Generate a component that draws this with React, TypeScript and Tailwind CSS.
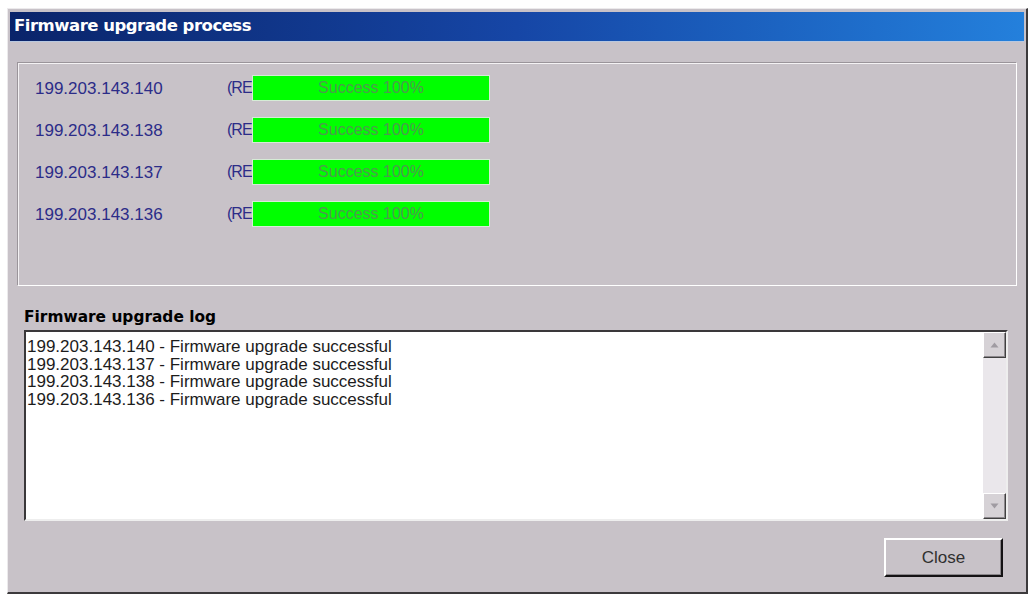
import React from 'react';

const HOSTS = ['199.203.143.140', '199.203.143.138', '199.203.143.137', '199.203.143.136'];

const LOG = [
  '199.203.143.140 - Firmware upgrade successful',
  '199.203.143.137 - Firmware upgrade successful',
  '199.203.143.138 - Firmware upgrade successful',
  '199.203.143.136 - Firmware upgrade successful',
];

function ScrollButton({ dir }: { dir: 'up' | 'down' }) {
  return (
    <div className="h-[26px] w-full bg-[#d6d2d6] border border-t-white border-l-white border-r-[#404040] border-b-[#404040] shadow-[inset_-1px_-1px_0_#8c888c] flex items-center justify-center">
      <svg width="9" height="6" viewBox="0 0 9 6">
        {dir === 'up' ? (
          <polygon points="4.5,0.5 8.5,5.5 0.5,5.5" fill="#a09ca2" />
        ) : (
          <polygon points="0.5,0.5 8.5,0.5 4.5,5.5" fill="#a09ca2" />
        )}
      </svg>
    </div>
  );
}

export default function App() {
  return (
    <div className="w-[1029px] h-[596px] bg-white pt-[8px] pl-[7px] overflow-hidden" style={{ fontFamily: '"Liberation Sans", Arial, sans-serif' }}>
      {/* Window */}
      <div className="w-[1021px] h-[586px] bg-[#c8c2c8] border-t border-l border-t-[#eceaec] border-l-[#eceaec] border-r-2 border-b-2 border-r-[#3c3a3c] border-b-[#3c3a3c] pt-[3px] pl-[2px] pr-[1px] flex flex-col">
        {/* Title bar */}
        <div className="h-[30px] w-[1014px] bg-gradient-to-r from-[#0a246a] via-[#1646a6] to-[#2480dc] flex items-center pl-[4px] border-b border-b-[#b8c8e0]">
          <span className="text-white font-bold text-[16.5px] tracking-[-0.5px] leading-none" style={{ fontFamily: '"DejaVu Sans", Verdana, sans-serif' }}>
            Firmware upgrade process
          </span>
        </div>

        {/* Progress group */}
        <div className="mt-[20px] ml-[7px] w-[1000px] h-[224px] border border-t-[#9a949a] border-l-[#9a949a] border-r-white border-b-white shadow-[inset_1px_1px_0_#f4f2f4] pt-[12px] flex flex-col gap-[16px]">
          {HOSTS.map((ip) => (
            <div key={ip} className="flex items-center h-[26px]">
              <span className="ml-[17px] w-[192px] text-[17px] text-[#2c2c88] leading-none">{ip}</span>
              <span className="w-[25px] text-[16px] tracking-[-1px] text-[#2c2c88] leading-none whitespace-nowrap">(RE</span>
              <div className="w-[238px] h-[26px] bg-[#00ff00] border border-[#d6ecd6] flex items-center justify-center">
                <span className="text-[16px] text-[#4e9a4e] leading-none">Success 100%</span>
              </div>
            </div>
          ))}
        </div>

        {/* Log label */}
        <div className="mt-[20px] ml-[14px] h-[24px] flex items-center">
          <span className="text-black font-bold text-[15.4px] leading-none" style={{ fontFamily: '"DejaVu Sans", Verdana, sans-serif' }}>
            Firmware upgrade log
          </span>
        </div>

        {/* Log box */}
        <div className="ml-[14px] w-[984px] h-[191px] bg-white border-2 border-t-[#3a383a] border-l-[#3a383a] border-r-[#eeeeee] border-b-[#eeeeee] flex">
          <div className="flex-1 pl-[1px] pt-[6px] text-[17px] leading-[17.7px] text-[#1c1c1c]">
            {LOG.map((line, i) => (
              <div key={i} className="whitespace-nowrap">{line}</div>
            ))}
          </div>
          <div className="w-[23px] h-full bg-[#eae7eb] flex flex-col justify-between">
            <ScrollButton dir="up" />
            <ScrollButton dir="down" />
          </div>
        </div>

        {/* Buttons */}
        <div className="mt-[17px] flex justify-end pr-[22px]">
          <button className="w-[119px] h-[39px] bg-[#c8c2c8] border-2 border-t-white border-l-white border-r-[#141214] border-b-[#141214] shadow-[inset_-1px_-1px_0_#8a868a] text-[17px] text-[#303030] flex items-center justify-center">
            Close
          </button>
        </div>
      </div>
    </div>
  );
}
